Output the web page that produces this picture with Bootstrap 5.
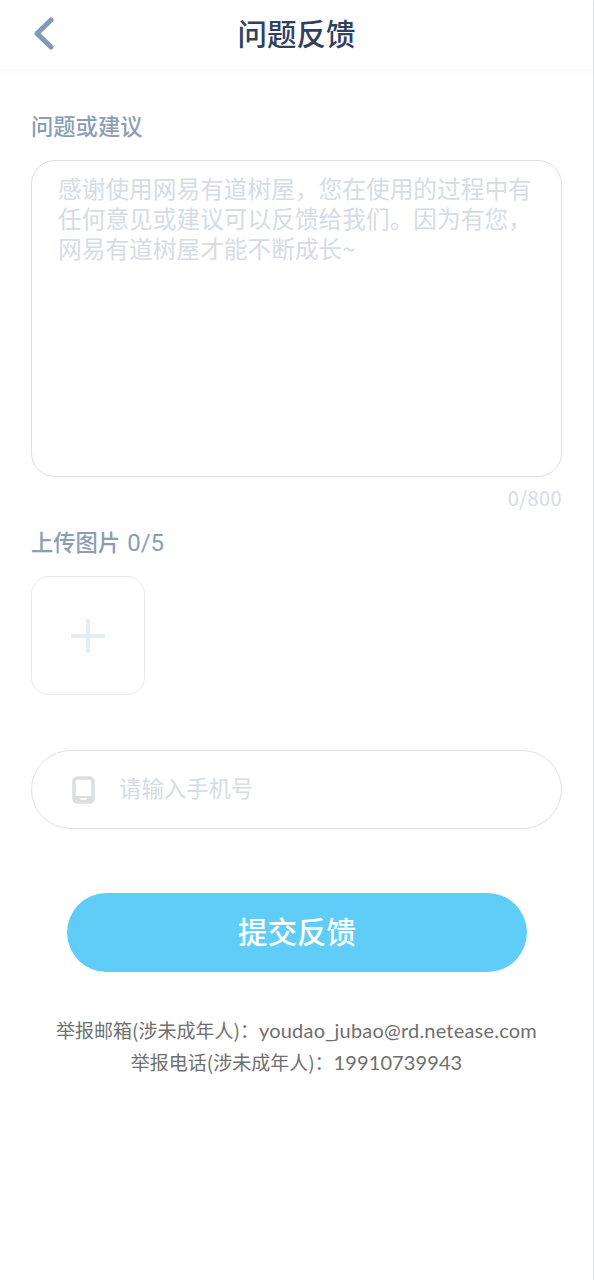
<!DOCTYPE html>
<html lang="zh-CN"><head><meta charset="utf-8"><title>问题反馈</title>
<meta name="viewport" content="width=device-width, initial-scale=1">
<link href="https://cdn.jsdelivr.net/npm/bootstrap@5.3.0/dist/css/bootstrap.min.css" rel="stylesheet">
<style>
html,body{height:100%}
body{font-family:"Noto Sans CJK SC","Noto Sans",sans-serif;background:#fff;overflow:hidden}
.app-page{width:594px;height:1280px;border-right:1px solid #dfe1e4}
.top-bar{height:69px;box-shadow:0 2px 6px rgba(140,160,190,.08)}
.back-btn{left:30px;top:14px;width:28px;height:38px}
.top-title{font-size:29.5px;font-weight:500;color:#2f4161;line-height:65px;height:69px}
.form-zone{padding:0 31px}
.field-label{font-size:22.300px;font-weight:500;color:#8c9db5;line-height:30px}
.first-label{margin-top:41px}
.note-box{height:317px;margin-top:20px;border:1px solid #dcdfe4;border-radius:24px;padding:12px 26px 14px;font-size:23.7px;line-height:30px;color:#d5dce6;background:#fff}
.count-text{font-size:20px;line-height:24px;color:#d5dce6;margin-top:9px;letter-spacing:.4px}
.upload-label{margin-top:16px}
.upload-count{font-family:Roboto,sans-serif;font-size:24px;font-weight:400;margin-left:2px}
.upload-box{width:114px;height:119px;margin-top:18px;border:1px solid #e7e9ec;border-radius:18px}
.phone-box{height:79px;margin-top:55px;border:1px solid #dfe1e5;border-radius:40px;padding:0 0 4px 40px;font-size:22.400px;color:#d5dce6;gap:23px}
.phone-icon{margin-top:4px}
.submit-btn{width:460px;height:79px;margin:64px 0 0 67px;display:block;background:#60cdf8;border:0;border-radius:40px;color:#fff;font-size:29.5px;font-weight:500;padding:0 0 4px}
.submit-btn:hover{background:#60cdf8;color:#fff}
.report-info{margin-top:42px;font-size:19px;line-height:32px;color:#6f6f6f}
.latin-part{font-family:Lato,sans-serif;font-size:20px;letter-spacing:.2px}
.digit-part{font-family:Lato,sans-serif;font-size:20px;letter-spacing:.1px}
</style></head>
<body>
<div class="app-page">
  <header class="top-bar position-relative text-center">
    <a href="#" class="back-btn position-absolute d-block" aria-label="返回">
      <svg width="28" height="38" viewBox="0 0 28 38" fill="none"><path d="M21 6 L7 19.500 L21 33" stroke="#8399b8" stroke-width="5.200" stroke-linecap="round" stroke-linejoin="round"/></svg>
    </a>
    <div class="top-title">问题反馈</div>
  </header>
  <main class="form-zone">
    <div class="field-label first-label">问题或建议</div>
    <div class="note-box form-control">感谢使用网易有道树屋，您在使用的过程中有任何意见或建议可以反馈给我们。因为有您，网易有道树屋才能不断成长~</div>
    <div class="count-text text-end">0/800</div>
    <div class="field-label upload-label">上传图片 <span class="upload-count">0/5</span></div>
    <div class="upload-box d-flex align-items-center justify-content-center">
      <svg width="34" height="34" viewBox="0 0 34 34"><path d="M17 1V33M1 17H33" stroke="#e6ecf4" stroke-width="4" stroke-linecap="round"/></svg>
    </div>
    <div class="phone-box d-flex align-items-center">
      <svg class="phone-icon" width="24" height="28" viewBox="0 0 24 28" fill="none"><rect x="2" y="2" width="19" height="24" rx="3.500" stroke="#dcdfe2" stroke-width="3.500"/><rect x="2" y="20" width="19" height="6" rx="2" fill="#dcdfe2"/><rect x="8.500" y="22" width="6" height="1.800" fill="#fff"/></svg>
      <span>请输入手机号</span>
    </div>
  </main>
  <button type="button" class="submit-btn btn">提交反馈</button>
  <div class="report-info text-center">
    <div>举报邮箱(涉未成年人)：<span class="latin-part">youdao_jubao@rd.netease.com</span></div>
    <div>举报电话(涉未成年人)：<span class="digit-part">19910739943</span></div>
  </div>
</div>
<script src="https://cdn.jsdelivr.net/npm/bootstrap@5.3.0/dist/js/bootstrap.bundle.min.js"></script>
</body></html>
